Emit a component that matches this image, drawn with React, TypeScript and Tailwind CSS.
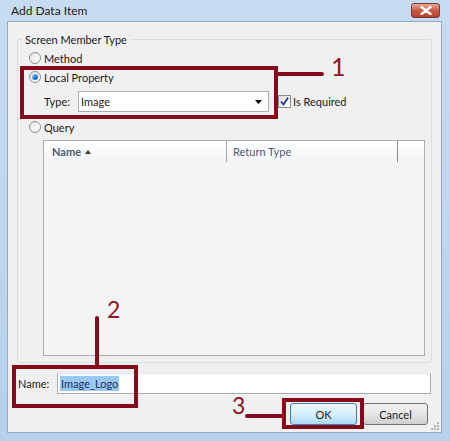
const Radio = ({ checked = false }: { checked?: boolean }) => (
  <span className="relative flex h-[12px] w-[12px] shrink-0 items-center justify-center rounded-full border border-[#8e8f8f] bg-gradient-to-br from-[#dcdcdc] via-[#f4f4f4] to-[#ffffff]">
    {checked && (
      <span className="h-[6px] w-[6px] rounded-full bg-gradient-to-br from-[#a9e1fb] via-[#2f8bd8] to-[#0b4f9e]" />
    )}
  </span>
);

const Check = () => (
  <span className="flex h-[13px] w-[13px] shrink-0 items-center justify-center border border-[#8e8f8f] bg-gradient-to-br from-[#dcdcdc] to-[#ffffff]">
    <svg width="9" height="9" viewBox="0 0 9 9">
      <path d="M1 4.5 L3.5 7.5 L8 0.8" fill="none" stroke="#1f3c8c" strokeWidth="1.8" />
    </svg>
  </span>
);

const App = () => {
  return (
    <div
      className="relative flex h-[441px] w-[450px] flex-col overflow-hidden bg-gradient-to-b from-[#c7dbf1] to-[#b8d0ea] text-[11px] leading-[15px] text-[#1a1a1a]"
      style={{ fontFamily: '"Segoe UI", Lato, "Noto Sans", sans-serif' }}
    >
      {/* title bar */}
      <div className="flex h-[21px] shrink-0 items-center pl-[11px] pr-[7px]">
        <span className="text-[12px] text-[#1c1c1c]">Add Data Item</span>
        <div className="ml-auto mr-[3px] flex h-[15px] w-[29px] items-center justify-center rounded-[3px] border border-[#7a3a3a] bg-gradient-to-b from-[#e8a89a] via-[#c85a45] to-[#b8402b]">
          <svg width="12" height="9" viewBox="0 0 12 9">
            <path d="M1.5 1 L10.5 8 M10.5 1 L1.5 8" stroke="#fff" strokeWidth="2.4" strokeLinecap="round" />
          </svg>
        </div>
      </div>

      {/* client area */}
      <div className="relative ml-[7px] flex h-[412px] w-[435px] flex-col border border-[#93a9c4] bg-[#f0f0f0]">
        <fieldset className="ml-[9px] mt-[10px] flex h-[331px] w-[415px] flex-col rounded-[3px] border border-[#d5dfe5] pb-[6px]">
          <legend className="ml-[4px] px-[3px]">Screen Member Type</legend>
          <div className="mt-[1px] flex h-[20px] items-center gap-[3px] pl-[11px]">
            <Radio />
            <span>Method</span>
          </div>
          <div className="flex h-[18px] items-center gap-[3px] pl-[11px]">
            <Radio checked />
            <span>Local Property</span>
          </div>
          <div className="mt-[5px] flex h-[21px] items-center pl-[26px]">
            <span className="w-[34px]">Type:</span>
            <div className="flex h-[21px] w-[191px] items-center border border-[#abadb3] bg-white pl-[2px] pr-[6px]">
              <span>Image</span>
              <svg className="ml-auto" width="7" height="4" viewBox="0 0 7 4">
                <path d="M0 0 H7 L3.5 4 Z" fill="#000" />
              </svg>
            </div>
            <div className="ml-[9px] flex items-center gap-[2px]">
              <Check />
              <span>Is Required</span>
            </div>
          </div>
          <div className="mt-[6px] flex h-[18px] items-center gap-[3px] pl-[11px]">
            <Radio />
            <span>Query</span>
          </div>
          <div className="ml-[25px] mt-[4px] flex h-[216px] w-[382px] flex-col border border-[#abadb3] bg-[#f4f4f4]">
            <div className="flex h-[21px] bg-gradient-to-b from-[#ffffff] to-[#f3f4f6] text-[#4c5a6c]">
              <div className="flex w-[183px] items-center border-r border-[#a8a8a8] pl-[8px] font-bold">
                Name
                <svg className="ml-[4px]" width="6" height="4" viewBox="0 0 6 4">
                  <path d="M0 4 H6 L3 0 Z" fill="#3a3a3a" />
                </svg>
              </div>
              <div className="flex w-[171px] items-center border-r border-[#8a8a8a] pl-[6px]">Return Type</div>
            </div>
          </div>
        </fieldset>

        <div className="ml-[10px] mt-[10px] flex h-[21px] items-center">
          <span className="w-[39px]">Name:</span>
          <div className="flex h-[21px] w-[374px] items-center border border-[#abadb3] border-t-[#e3e9ef] bg-white pl-[2px]">
            <span className="bg-[#99c9ef] px-[1px] text-[#1a2f66]">Image_Logo</span>
          </div>
        </div>

        <div className="mr-[13px] mt-[9px] flex justify-end gap-[6px]">
          <div className="flex h-[22px] w-[67px] items-center justify-center rounded-[3px] border border-[#3c7fb1] bg-gradient-to-b from-[#eaf6fd] via-[#d9f0fc] to-[#a7d9f5]">
            OK
          </div>
          <div className="flex h-[22px] w-[65px] items-center justify-center rounded-[3px] border border-[#707070] bg-gradient-to-b from-[#f2f2f2] via-[#e6e6e6] to-[#cfcfcf]">
            Cancel
          </div>
        </div>

        {/* resize grip */}
        <svg className="absolute bottom-[2px] right-[2px]" width="9" height="9" viewBox="0 0 9 9">
          <g fill="#b4b4b4">
            <rect x="7" y="1" width="2" height="2" />
            <rect x="4" y="4" width="2" height="2" />
            <rect x="7" y="4" width="2" height="2" />
            <rect x="1" y="7" width="2" height="2" />
            <rect x="4" y="7" width="2" height="2" />
            <rect x="7" y="7" width="2" height="2" />
          </g>
        </svg>
      </div>

      {/* annotations */}
      <div className="pointer-events-none absolute left-[20px] top-[66px] h-[53px] w-[258px] border-[4px] border-[#870a1c]" />
      <div className="absolute left-[276px] top-[72px] h-[4px] w-[48px] rounded-r-full bg-[#870a1c]" />
      <span className="absolute left-[331px] top-[53px] text-[25px] leading-[26px] text-[#8e1424]">1</span>

      <div className="pointer-events-none absolute left-[12px] top-[365px] h-[43px] w-[126px] border-[4px] border-[#870a1c]" />
      <div className="absolute left-[95px] top-[316px] h-[50px] w-[4px] rounded-t-full bg-[#870a1c]" />
      <span className="absolute left-[107px] top-[297px] text-[23px] leading-[24px] text-[#8e1424]">2</span>

      <div className="pointer-events-none absolute left-[282px] top-[398px] h-[31px] w-[82px] border-[4px] border-[#870a1c]" />
      <div className="absolute left-[245px] top-[414px] h-[4px] w-[38px] rounded-l-full bg-[#870a1c]" />
      <span className="absolute left-[232px] top-[393px] text-[23px] leading-[24px] text-[#8e1424]">3</span>
    </div>
  );
};

export default App;
